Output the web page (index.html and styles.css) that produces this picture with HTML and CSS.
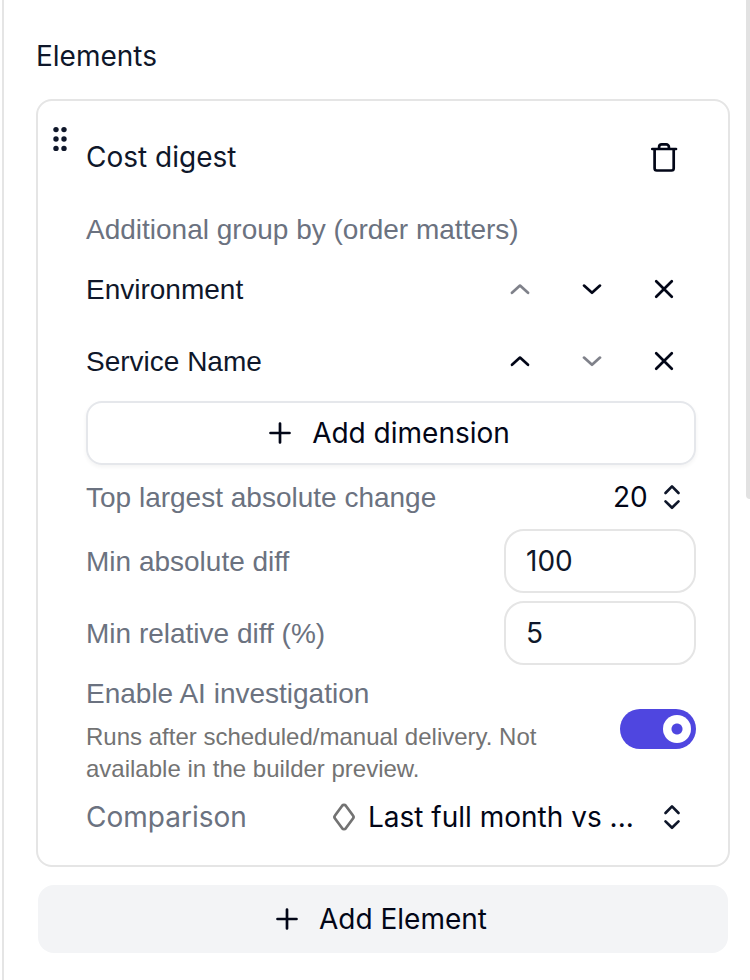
FILE: index.html
```html
<!DOCTYPE html>
<html lang="en">
<head>
<meta charset="utf-8">
<meta name="viewport" content="width=device-width, initial-scale=1">
<title>Elements</title>
<link rel="stylesheet" href="styles.css">
</head>
<body>
<main class="panel">
  <section class="elements">
    <h2 class="title">Elements</h2>
    <article class="card">
      <button class="handle" type="button" aria-label="Reorder element">
        <svg width="32" height="28" viewBox="0 0 32 28" fill="currentColor"><circle cx="12" cy="4.6" r="2.7"/><circle cx="20" cy="4.6" r="2.7"/><circle cx="12" cy="14" r="2.7"/><circle cx="20" cy="14" r="2.7"/><circle cx="12" cy="23.4" r="2.7"/><circle cx="20" cy="23.4" r="2.7"/></svg>
      </button>
      <div class="content">
        <header class="row header">
          <h3 class="name">Cost digest</h3>
          <button class="icon-button" type="button" aria-label="Delete element">
            <svg class="icon" viewBox="0 0 32 32"><path d="M4.3 8H28M6.6 8v19.3a2.2 2.2 0 0 0 2.2 2.2h14.7a2.2 2.2 0 0 0 2.2-2.2V8M11.1 8V6a2.7 2.7 0 0 1 2.7-2.7h4.4A2.7 2.7 0 0 1 20.9 6V8"/></svg>
          </button>
        </header>
        <p class="label">Additional group by (order matters)</p>
        <div class="row">
          <span class="dimension">Environment</span>
          <button class="icon-button" type="button" aria-label="Move Environment up" disabled><svg class="icon" viewBox="0 0 32 32"><path d="M8 19.8l8-7.2 8 7.2"/></svg></button>
          <button class="icon-button" type="button" aria-label="Move Environment down"><svg class="icon" viewBox="0 0 32 32"><path d="M8 12.6l8 7.2 8-7.2"/></svg></button>
          <button class="icon-button" type="button" aria-label="Remove Environment"><svg class="icon" viewBox="0 0 32 32"><path d="M8.2 8.2l15.6 15.6M23.8 8.2L8.2 23.8"/></svg></button>
        </div>
        <div class="row">
          <span class="dimension">Service Name</span>
          <button class="icon-button" type="button" aria-label="Move Service Name up"><svg class="icon" viewBox="0 0 32 32"><path d="M8 19.8l8-7.2 8 7.2"/></svg></button>
          <button class="icon-button" type="button" aria-label="Move Service Name down" disabled><svg class="icon" viewBox="0 0 32 32"><path d="M8 12.6l8 7.2 8-7.2"/></svg></button>
          <button class="icon-button" type="button" aria-label="Remove Service Name"><svg class="icon" viewBox="0 0 32 32"><path d="M8.2 8.2l15.6 15.6M23.8 8.2L8.2 23.8"/></svg></button>
        </div>
        <button class="button outline" type="button">
          <svg class="icon" viewBox="0 0 32 32"><path d="M6.5 16h19M16 6.5v19"/></svg>
          Add dimension
        </button>
        <div class="row short">
          <label class="label" for="top">Top largest absolute change</label>
          <span class="picker">
            <select id="top"><option>20</option></select>
            <svg class="icon" viewBox="0 0 32 32"><path d="M9.5 12l6.5-6.6 6.5 6.6M9.5 20.4l6.5 6.4 6.5-6.4"/></svg>
          </span>
        </div>
        <div class="row">
          <label class="label" for="absolute">Min absolute diff</label>
          <input class="field" id="absolute" type="text" inputmode="numeric" value="100">
        </div>
        <div class="row">
          <label class="label" for="relative">Min relative diff (%)</label>
          <input class="field" id="relative" type="text" inputmode="numeric" value="5">
        </div>
        <div class="row">
          <div class="setting">
            <label class="label" for="investigate">Enable AI investigation</label>
            <p class="help" id="investigate-help">Runs after scheduled/manual delivery. Not available in the builder preview.</p>
          </div>
          <input class="switch" id="investigate" type="checkbox" role="switch" aria-describedby="investigate-help" checked>
        </div>
        <div class="row short">
          <label class="label comparison" for="comparison">Comparison</label>
          <svg class="icon diamond" viewBox="0 0 32 32"><path d="M14.2 4.7a2.3 2.3 0 0 1 3.6 0l7.2 9.8a2.4 2.4 0 0 1 0 3l-7.2 9.8a2.3 2.3 0 0 1-3.6 0L7 17.5a2.4 2.4 0 0 1 0-3z"/></svg>
          <span class="picker wide">
            <select id="comparison"><option>Last full month vs ...</option></select>
            <svg class="icon" viewBox="0 0 32 32"><path d="M9.5 12l6.5-6.6 6.5 6.6M9.5 20.4l6.5 6.4 6.5-6.4"/></svg>
          </span>
        </div>
      </div>
    </article>
    <button class="button filled" type="button">
      <svg class="icon" viewBox="0 0 32 32"><path d="M6.5 16h19M16 6.5v19"/></svg>
      Add Element
    </button>
  </section>
  <div class="scroll-thumb"></div>
</main>
</body>
</html>
```

FILE: styles.css
```css
* {
  box-sizing: border-box;
}

body {
  margin: 0;
  background: #fff;
  color: #0f172a;
  font: 28px/40px Inter, sans-serif;
  font-optical-sizing: none;
}

h2, h3, p {
  margin: 0;
  font-size: inherit;
  font-weight: 400;
}

button, input, select {
  margin: 0;
  border: 0;
  padding: 0;
  background: none;
  color: #020617;
  font: inherit;
  font-optical-sizing: none;
}

.panel {
  display: flex;
  min-height: 100vh;
  margin-left: 2px;
  border-left: 2px solid #e5e5e5;
}

.elements {
  flex: 1;
  min-width: 0;
  padding: 36px 16px 24px 32px;
}

.scroll-thumb {
  width: 4px;
  height: 499px;
  border-bottom-left-radius: 4px;
  background: #e2e2e2;
}

.card {
  display: flex;
  align-items: flex-start;
  gap: 10px;
  margin-top: 23px;
  padding: 24px 32px 24px 6px;
  border: 2px solid #e5e5e5;
  border-radius: 16px;
}

.handle {
  display: flex;
  color: #0f172a;
}

.content {
  flex: 1;
  min-width: 0;
  display: flex;
  flex-direction: column;
  gap: 8px;
}

.row {
  display: flex;
  align-items: center;
  gap: 8px;
  min-height: 64px;
}

.short {
  min-height: 48px;
}

.header {
  margin-bottom: 12px;
}

.name, .dimension, .row > .label, .setting {
  flex: 1;
}

.label, .dimension, .help {
  font-family: "Liberation Sans", sans-serif;
}

.label, .dimension {
  padding-top: 2px;
  line-height: 38px;
}

.label {
  color: #6b7280;
}

.comparison {
  padding-top: 0;
  font-family: Inter, sans-serif;
}

.icon {
  flex: none;
  width: 32px;
  height: 32px;
  fill: none;
  stroke: currentColor;
  stroke-width: 2.7;
  stroke-linecap: round;
  stroke-linejoin: round;
}

.icon-button {
  display: flex;
  align-items: center;
  justify-content: center;
  width: 64px;
  height: 64px;
}

.icon-button:disabled {
  opacity: 0.5;
}

.button {
  display: flex;
  align-items: center;
  justify-content: center;
  gap: 16px;
  height: 64px;
  padding-right: 8px;
  border-radius: 16px;
}

.outline {
  border: 2px solid #e5e7eb;
  box-shadow: 0 2px 4px rgb(0 0 0 / 5%);
}

.filled {
  width: calc(100% - 4px);
  height: 68px;
  margin: 18px 2px 0;
  background: #f3f4f6;
}

.picker {
  display: grid;
  grid-template-columns: auto 32px;
  align-items: center;
  margin-right: 8px;
}

.picker select {
  grid-area: 1 / 1 / 2 / 3;
  height: 48px;
  padding-right: 40px;
  appearance: none;
}

.picker .icon {
  grid-area: 1 / 2;
  pointer-events: none;
}

.wide {
  width: 320px;
}

.diamond {
  color: #737373;
}

.field {
  width: 192px;
  height: 64px;
  padding: 0 20px;
  border: 2px solid #e5e5e5;
  border-radius: 20px;
  color: #0f172a;
}

.setting .label {
  display: block;
}

.help {
  max-width: 480px;
  margin-top: 8px;
  color: #737373;
  font-size: 24px;
  line-height: 32px;
}

.switch {
  display: flex;
  align-items: center;
  width: 76px;
  height: 40px;
  padding: 5px;
  border-radius: 20px;
  background: #d4d4d4;
  appearance: none;
}

.switch::before {
  content: "";
  width: 28px;
  height: 28px;
  border-radius: 50%;
  background: radial-gradient(circle, #4f46e0 5px, #fff 6px);
}

.switch:checked {
  justify-content: flex-end;
  background: #4f46e0;
}
```
